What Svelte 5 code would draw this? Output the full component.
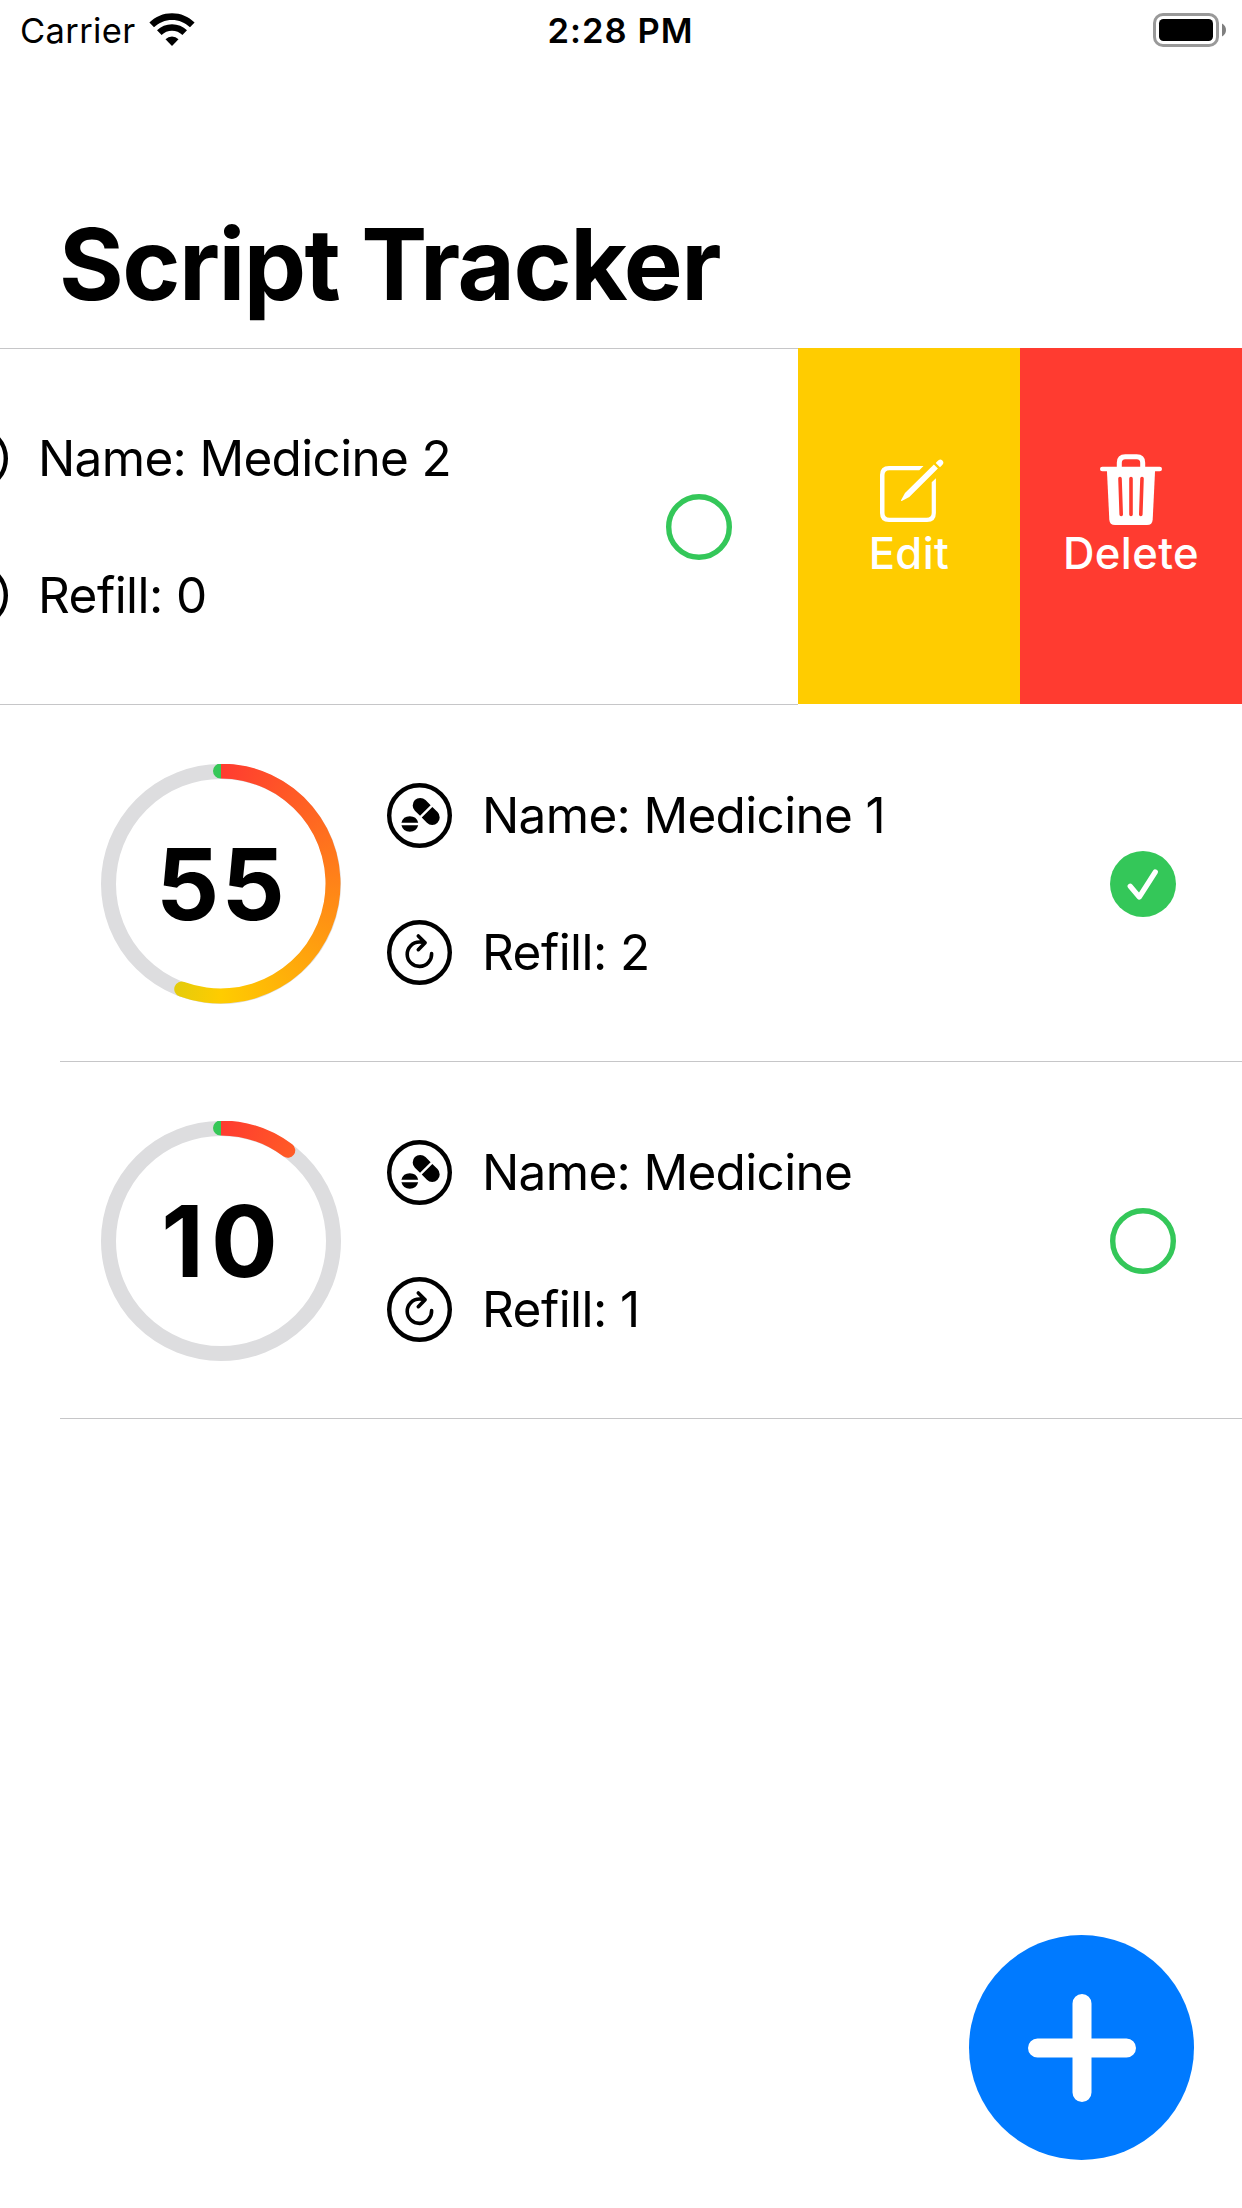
<script>
  const medicines = [
    { name: 'Medicine 2', refill: 0, days: 0, progress: 0, done: false, swiped: true },
    { name: 'Medicine 1', refill: 2, days: 55, progress: 0.556, done: true, swiped: false },
    { name: 'Medicine', refill: 1, days: 10, progress: 0.102, done: false, swiped: false }
  ];

  // Outline of a ring segment with rounded ends, clockwise from 12 o'clock
  function arc(progress) {
    const c = 120, outer = 120, inner = 105, cap = 7.5;
    const a = progress * 2 * Math.PI;
    const large = progress > 0.5 ? 1 : 0;
    const at = (r) => `${c + r * Math.sin(a)} ${c - r * Math.cos(a)}`;
    return `path("M${c} ${c - outer}A${outer} ${outer} 0 ${large} 1 ${at(outer)}A${cap} ${cap} 0 0 1 ${at(inner)}A${inner} ${inner} 0 ${large} 0 ${c} ${c - inner}A${cap} ${cap} 0 0 1 ${c} ${c - outer}Z")`;
  }
</script>

<div class="screen">
  <div class="status">
    <div class="side">
      <span class="carrier">Carrier</span>
      <svg width="46" height="34" viewBox="0 0 46 34">
        <path d="M0.4 9.6C6.5 3.6 14.3 0.3 23 0.3s16.5 3.3 22.6 9.3L41 14.3C36.2 9.6 29.9 7 23 7S9.8 9.6 5 14.3Z" />
        <path d="M8 17.3C12 13.3 17.2 11.2 23 11.2s11 2.1 15 6.1l-4.6 4.7C30.6 19.3 27 17.8 23 17.8s-7.6 1.5-10.4 4.2Z" />
        <path d="M16.5 26.2a9.3 9.3 0 0 1 13 0L23 33Z" />
      </svg>
    </div>
    <span class="time">2:28 PM</span>
    <div class="side end">
      <svg width="74" height="34" viewBox="0 0 74 34">
        <rect x="1.5" y="1.5" width="63" height="31" rx="8.5" fill="none" stroke="#999" stroke-width="3" />
        <rect x="6" y="6" width="54" height="22" rx="4.5" />
        <path d="M69 10.5a7.3 7.3 0 0 1 0 13Z" fill="#7f7f7f" />
      </svg>
    </div>
  </div>

  <header><h1>Script Tracker</h1></header>

  <ul>
    {#each medicines as med}
      <li class:swiped={med.swiped}>
        <div class="content">
          <div class="ring">
            {#if med.days > 0}
              <div class="arc" style:clip-path={arc(med.progress)}></div>
              <span class="days" class:loose={String(med.days).startsWith('1')}>{med.days}</span>
            {/if}
          </div>
          <div class="info">
            <div class="line">
              <svg width="65" height="65" viewBox="0 0 65 65">
                <circle cx="32.5" cy="32.5" r="30.3" fill="none" stroke="#000" stroke-width="4.4" />
                <path d="M14.4 39.7a8.7 8.7 0 0 1 16.8 0ZM14.4 42.3a8.7 8.7 0 0 0 16.8 0Z" />
                <g transform="translate(39.2 28.4) rotate(45)">
                  <path d="M-1.2 -7.5H-8.5a7.5 7.5 0 0 0 0 15H-1.2ZM1.2 -7.5H8.5a7.5 7.5 0 0 1 0 15H1.2Z" />
                </g>
              </svg>
              <span>Name: {med.name}</span>
            </div>
            <div class="line refill">
              <svg width="65" height="65" viewBox="0 0 65 65" fill="none" stroke="#000" stroke-linecap="round" stroke-linejoin="round">
                <circle cx="32.5" cy="32.5" r="30.3" stroke-width="4.4" />
                <path d="M44.6 33.6a12.2 12.2 0 1 1-12.2-11.6q3.2 0 5.5 0.6M31.3 15.9l6.8 6.8l-6.8 7" stroke-width="3.6" />
              </svg>
              <span>Refill: {med.refill}</span>
            </div>
          </div>
          <svg width="66" height="66" viewBox="0 0 66 66" fill="none" stroke-linecap="round" stroke-linejoin="round">
            {#if med.done}
              <circle cx="33" cy="33" r="33" fill="#34c759" />
              <path d="M20.2 35.2L29.3 46L45.3 21" stroke="#fff" stroke-width="5.2" />
            {:else}
              <circle cx="33" cy="33" r="30.3" stroke="#34c759" stroke-width="5.4" />
            {/if}
          </svg>
        </div>
        {#if med.swiped}
          <button class="edit">
            <svg width="72" height="72" viewBox="-2 0 72 72" fill="#fff">
              <path d="M48.5 12L44.3 16.2H14.5Q9.5 16.2 9.5 21V59Q9.5 63.7 14.5 63.7H51.5Q56.7 63.7 56.7 59V28.3L60.9 24.2V59Q60.9 68 52 68H14Q5 68 5 59V21Q5 12 14 12Z" />
              <path d="M58.9 10.5L62.9 14.5L34.3 43L27.2 46.7Q25.4 47.6 26.3 45.8L30 38.9ZM60.7 9L62.6 7Q65 4.2 67.4 6.6Q69.6 9 67 11.3L65 13.2Z" />
            </svg>
            <span>Edit</span>
          </button>
          <button class="delete">
            <svg width="72" height="72" viewBox="0 0 72 72">
              <path d="M24.3 14V8.8Q24.3 2.8 30.3 2.8H41.7Q47.7 2.8 47.7 8.8V14" fill="none" stroke="#fff" stroke-width="5" />
              <rect x="5" y="12.7" width="62" height="4.6" rx="2.3" fill="#fff" />
              <path d="M11.9 16H60.1L57.7 65.5Q57.4 71 52 71H20Q14.6 71 14.3 65.5Z" fill="#fff" />
              <path d="M25 24.5L26.2 60.5M36 24.5V60.5M47 24.5L45.8 60.5" stroke="#ff3b30" stroke-width="3.6" stroke-linecap="round" />
            </svg>
            <span>Delete</span>
          </button>
        {/if}
      </li>
    {/each}
  </ul>

  <button class="add" aria-label="Add">
    <svg width="108" height="108" viewBox="0 0 108 108" stroke="#fff" stroke-width="19" stroke-linecap="round">
      <path d="M54 9.5V98.5M9.5 54H98.5" />
    </svg>
  </button>
</div>

<style>
  :global(body) { margin: 0; background: #fff; }
  .screen {
    position: relative;
    width: 1242px;
    height: 2208px;
    overflow: hidden;
    background: #fff;
    color: #000;
    font-family: Inter, "Liberation Sans", sans-serif;
  }
  .screen * { box-sizing: border-box; }
  span, h1 { white-space: nowrap; }
  svg { display: block; flex: none; }
  .status { display: flex; align-items: center; height: 60px; padding: 0 15px; }
  .side { flex: 1; display: flex; align-items: center; gap: 13.5px; }
  .end { justify-content: flex-end; }
  .carrier, .time { padding-top: 2px; font-size: 34.5px; line-height: 60px; }
  .carrier { margin-left: 5px; letter-spacing: 0.35px; }
  .time { margin-right: 1px; font-weight: 600; letter-spacing: 1.05px; }
  header { height: 288px; padding: 144px 0 0 59px; }
  h1 { margin: 0; font-size: 99px; line-height: 120px; font-weight: 700; letter-spacing: -1.55px; }
  ul { margin: 0; padding: 0; list-style: none; }
  li { display: flex; height: 357px; }
  .swiped { margin-left: -444px; width: 1686px; }
  .content {
    flex: none;
    width: 1182px;
    margin-left: 60px;
    padding: 2px 66px 0 40.5px;
    display: flex;
    align-items: center;
    border-bottom: 1px solid #c6c6c8;
  }
  .swiped .content { box-shadow: inset 0 1px #c6c6c8; }
  .ring {
    position: relative;
    display: grid;
    place-items: center;
    width: 240px;
    height: 240px;
    margin-bottom: 1px;
    border-radius: 50%;
    border: 15px solid #dddddf;
  }
  .arc {
    position: absolute;
    inset: -15px;
    background: conic-gradient(#ff3b30, #fc0 50%, #34c759);
  }
  .days {
    margin-left: 2px;
    font-size: 99px;
    line-height: 120px;
    font-weight: 700;
    letter-spacing: 2.3px;
  }
  .loose { margin-left: 5px; letter-spacing: 7px; }
  .info { flex: 1; display: grid; gap: 72px; margin-left: 46.5px; }
  .line {
    display: flex;
    align-items: center;
    gap: 30px;
    font-size: 49.5px;
    line-height: 65px;
    letter-spacing: -0.68px;
  }
  .refill { letter-spacing: -0.55px; }
  button { border: 0; padding: 0; font: inherit; color: #fff; }
  .edit, .delete {
    display: flex;
    flex-direction: column;
    align-items: center;
    width: 222px;
    height: 356px;
    padding-top: 106px;
    font-size: 43.6px;
    line-height: 55px;
    font-weight: 500;
    letter-spacing: 0.4px;
  }
  .edit { background: #fc0; }
  .delete { background: #ff3b30; }
  .add {
    position: absolute;
    right: 48px;
    bottom: 48px;
    display: grid;
    place-items: center;
    width: 225px;
    height: 225px;
    border-radius: 50%;
    background: #007aff;
  }
</style>
